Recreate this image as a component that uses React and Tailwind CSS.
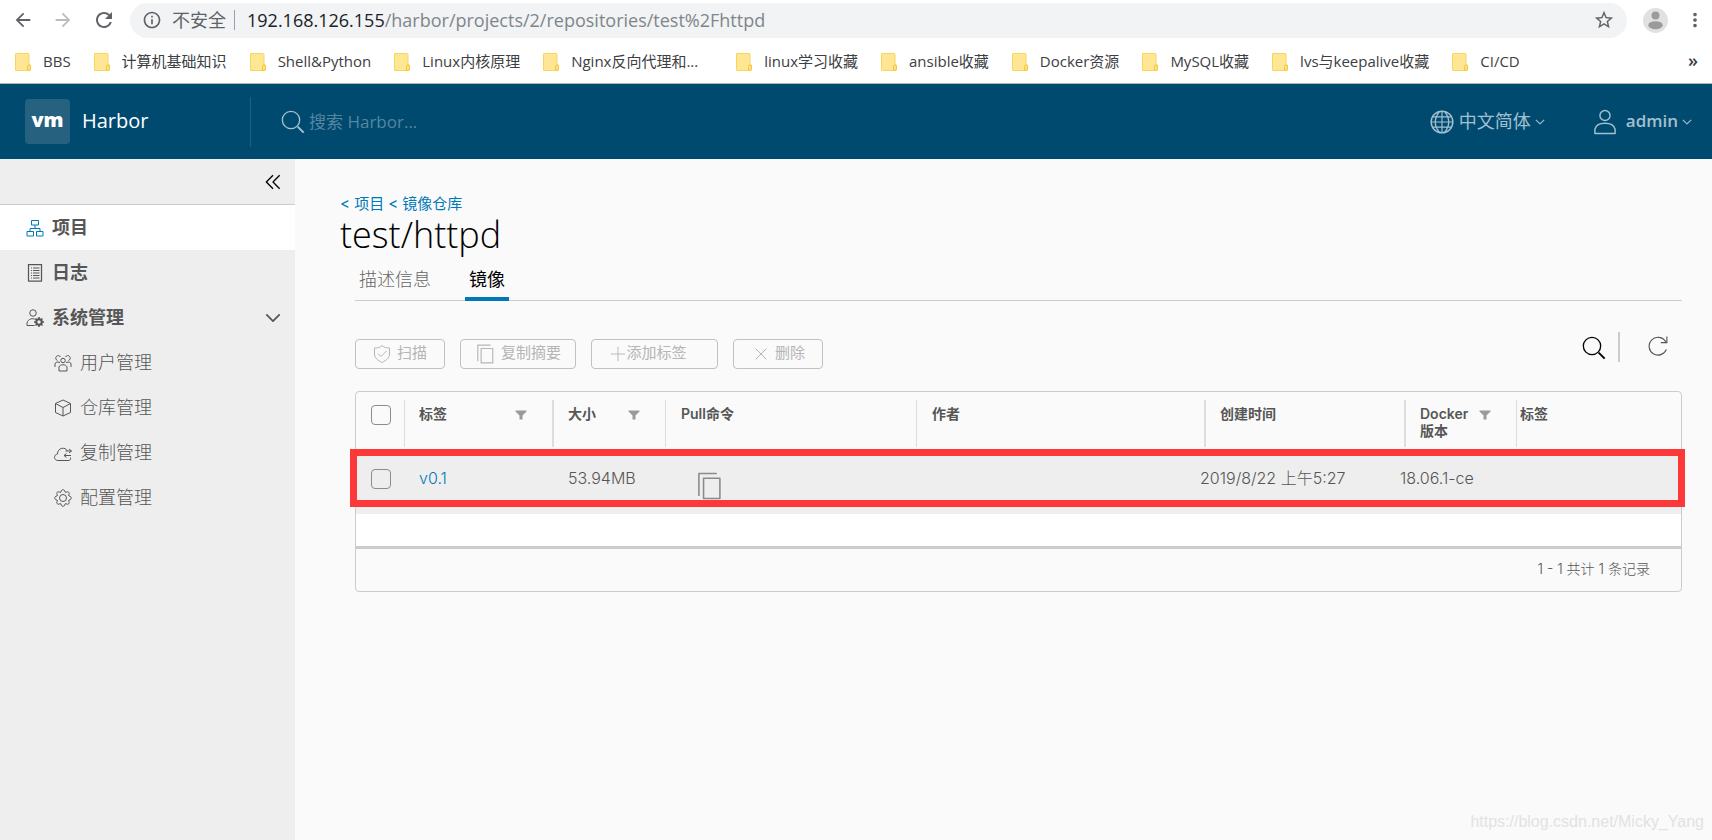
import {
  MdArrowBack,
  MdArrowForward,
  MdRefresh,
  MdInfoOutline,
  MdStarBorder,
  MdMoreVert,
} from 'react-icons/md';

const bookmarks = [
  { name: 'BBS' },
  { name: '计算机基础知识' },
  { name: 'Shell&Python' },
  { name: 'Linux内核原理' },
  { name: 'Nginx反向代理和...', truncated: true },
  { name: 'linux学习收藏' },
  { name: 'ansible收藏' },
  { name: 'Docker资源' },
  { name: 'MySQL收藏' },
  { name: 'lvs与keepalive收藏' },
  { name: 'CI/CD' },
];

function Icon({ size = 18, className = '', strokeWidth = 2, children }) {
  return (
    <svg
      width={size}
      height={size}
      viewBox="0 0 36 36"
      fill="none"
      stroke="currentColor"
      strokeWidth={strokeWidth}
      strokeLinejoin="round"
      className={`shrink-0 ${className}`}
      aria-hidden="true"
    >
      {children}
    </svg>
  );
}

function SearchIcon({ size = 24, className }) {
  return (
    <Icon size={size} className={className} strokeWidth={2}>
      <circle cx="15" cy="15" r="13" />
      <path d="M25 25l9 9" strokeWidth="3" />
    </Icon>
  );
}

function CaretIcon({ size = 10, className }) {
  return (
    <Icon size={size} className={className} strokeWidth={4}>
      <path d="M3 10l15 15 15-15" />
    </Icon>
  );
}

function FolderIcon() {
  return (
    <svg width="16" height="18" viewBox="0 0 16 18" className="shrink-0" aria-hidden="true">
      <path d="M1 .5h12a1 1 0 0 1 1 1V12h1.5v4a1.500 1.500 0 0 1-1.500 1.500H1a.5.5 0 0 1-.5-.5V1a.5.5 0 0 1 .5-.5z" fill="#ffe694" stroke="#f7d65c" />
      <path d="M12.500 17v-3.500a1.500 1.500 0 0 1 3 0V16a1.500 1.500 0 0 1-1.500 1.500z" fill="#ffe083" stroke="#f3c63a" />
    </svg>
  );
}

function CopyIcon({ size, className }) {
  return (
    <Icon size={size} className={className}>
      <path d="M5 31V2h23" />
      <path d="M11 8h21v26H11z" />
    </Icon>
  );
}

function FilterIcon() {
  return (
    <svg width="12" height="10" viewBox="0 0 12 10" className="shrink-0" aria-hidden="true">
      <path d="M.5.500h11v1L7.500 5.500V9.500h-3v-4L.5 1.500z" fill="#9a9a9a" />
    </svg>
  );
}

function BrowserBar() {
  return (
    <div className="bg-white font-['Open_Sans','Noto_Sans_CJK_SC',sans-serif]">
      <div className="flex h-10 items-center pl-3 text-[#5f6368]">
        <button type="button" aria-label="后退" className="mr-[18px]">
          <MdArrowBack size={22} />
        </button>
        <button type="button" aria-label="前进" className="mr-[18px]">
          <MdArrowForward size={22} className="text-[#babcbe]" />
        </button>
        <button type="button" aria-label="重新加载" className="mr-3.5">
          <MdRefresh size={24} />
        </button>
        <div className="flex h-[35px] flex-1 items-center rounded-full bg-[#f1f3f4] pr-3 pl-3 text-lg">
          <MdInfoOutline size={20} />
          <span className="ml-2.5">不安全</span>
          <span className="mx-2 h-5 w-px bg-[#9aa0a6]" />
          <span className="ml-1 flex-1 text-[#80868b]">
            <span className="text-[#202124]">192.168.126.155</span>/harbor/projects/2/repositories/test%2Fhttpd
          </span>
          <button type="button" aria-label="收藏">
            <MdStarBorder size={22} />
          </button>
        </div>
        <button type="button" aria-label="用户" className="mx-4">
          <svg width="25" height="25" viewBox="0 0 25 25" aria-hidden="true">
            <circle cx="12.500" cy="12.500" r="12.500" fill="#e1e1e1" />
            <circle cx="12.500" cy="7.500" r="4" fill="#9b9b9b" />
            <ellipse cx="12.500" cy="17.200" rx="7.200" ry="4" fill="#9b9b9b" />
          </svg>
        </button>
        <button type="button" aria-label="更多" className="mr-1.5">
          <MdMoreVert size={22} />
        </button>
      </div>
      <nav className="flex h-11 items-center border-b border-[#b6b4b6] pr-3.5 pl-[15px] text-[15px] text-[#3c4043]">
        <div className="flex flex-1 items-center gap-[23px]">
          {bookmarks.map(({ name, truncated }) => (
            <a key={name} href="#" className="flex items-center gap-3 whitespace-nowrap">
              <FolderIcon />
              <span className={truncated ? 'w-[142px]' : undefined}>{name}</span>
            </a>
          ))}
        </div>
        <button type="button" className="pb-1 text-lg font-semibold">»</button>
      </nav>
    </div>
  );
}

function Header() {
  return (
    <header className="flex h-[75px] items-center bg-[#004a70] text-lg text-[#a3c0cf]">
      <div className="flex w-[250px] items-center gap-3 pl-[25px]">
        <span className="flex size-[45px] items-center justify-center rounded bg-[#26617f] pb-1 font-['Open_Sans',sans-serif] text-xl font-extrabold text-white">
          vm
        </span>
        <span className="pb-0.5 font-['Open_Sans',sans-serif] text-xl text-white">Harbor</span>
      </div>
      <label className="flex h-[50px] flex-1 items-center gap-1 border-l border-[#1f5f81] pl-[30px]">
        <SearchIcon />
        <input
          type="text"
          aria-label="搜索"
          placeholder="搜索 Harbor..."
          className="w-60 bg-transparent pt-0.5 font-['Open_Sans','Noto_Sans_CJK_SC',sans-serif] text-[17px] outline-none placeholder:text-[#5586a0]"
        />
      </label>
      <div className="flex items-center gap-1">
        <Icon size={26} strokeWidth={2}>
          <circle cx="18" cy="18" r="15" />
          <path d="M18 3v30M5 11h26M3 18h30M5 25h26M14 4c-7 9-7 19 0 28M22 4c7 9 7 19 0 28" strokeWidth="1.600" />
        </Icon>
        <select aria-label="语言" className="appearance-none bg-transparent outline-none">
          <option>中文简体</option>
        </select>
        <CaretIcon />
      </div>
      <button type="button" className="mr-5 ml-[47px] flex items-center font-['Open_Sans',sans-serif] text-[17px] font-semibold">
        <Icon size={26} strokeWidth={2} className="mr-2">
          <circle cx="18" cy="9" r="7" />
          <path d="M4 34v-6c3-11 25-11 28 0v6z" />
        </Icon>
        admin
        <CaretIcon className="ml-1" />
      </button>
    </header>
  );
}

const subItems = [
  {
    name: '用户管理',
    icon: (
      <>
        <circle cx="18" cy="13" r="4.500" />
        <path d="M10 34v-8c1-6 15-6 16 0v8z" />
        <path d="M13 6a5 5 0 1 0-6 7M23 6a5 5 0 1 1 6 7M2 26v-6c0-3 4-5 10-3M34 26v-6c0-3-4-5-10-3" />
      </>
    ),
  },
  {
    name: '仓库管理',
    icon: <path d="M18 2l15 7v18l-15 7-15-7V9zM3 9l15 8 15-8M18 17v17" />,
  },
  {
    name: '复制管理',
    icon: (
      <>
        <path d="M33 27c1 4-1 6-5 6H8c-9 0-9-12-1-13 0-13 16-15 20-6" />
        <path d="M23 14h12m-5-4l5 4-5 4M34 23H20m5-4l-5 4 5 4" />
      </>
    ),
  },
  {
    name: '配置管理',
    icon: (
      <>
        <circle cx="18" cy="18" r="7" />
        <path d="M14 6c0-6 8-6 8 0l2 1c4-4 9 1 5 5l1 2c6 0 6 8 0 8l-1 2c4 4-1 9-5 5l-2 1c0 6-8 6-8 0l-2-1c-4 4-9-1-5-5l-1-2c-6 0-6-8 0-8l1-2c-4-4 1-9 5-5z" />
      </>
    ),
  },
];

function Sidebar() {
  return (
    <aside className="w-[295px] shrink-0 bg-[#eee] text-lg text-[#565656]">
      <div className="flex h-[46px] items-center justify-end border-b border-[#ccc] pr-3.5">
        <button type="button" aria-label="收起" className="text-black">
          <Icon size={16} strokeWidth={3}>
            <path d="M18 3L3 18l15 15M33 3L18 18l15 15" />
          </Icon>
        </button>
      </div>
      <nav>
        <a href="#" className="flex h-[45px] items-center gap-2 bg-white pl-[26px] font-bold">
          <Icon className="text-[#0079b8]">
            <path d="M11 3h14v9H11zM2 25h13v9H2zM21 25h13v9H21zM18 12v6M8 25v-6h20v6" />
          </Icon>
          项目
        </a>
        <a href="#" className="flex h-[45px] items-center gap-2 pl-[26px] font-bold">
          <Icon>
            <path d="M5 1h26v33H5z" strokeWidth="2.500" />
            <path d="M10 8h2M14 8h13M10 13h2M14 13h13M10 18h2M14 18h13M10 23h2M14 23h13M10 28h2M14 28h13" />
          </Icon>
          日志
        </a>
        <button type="button" className="flex h-[45px] w-full items-center gap-2 pr-3.5 pl-[26px] font-bold">
          <Icon>
            <circle cx="14" cy="8" r="6.500" />
            <path d="M17 33H2v-5c2-9 12-10 17-7" />
            <circle cx="26" cy="26" r="5.500" strokeWidth="4" />
            <path d="M26 16v4M26 32v4M16 26h4M32 26h4M19 19l3 3M30 30l3 3M33 19l-3 3M22 30l-3 3" strokeWidth="3" />
          </Icon>
          <span className="flex-1 text-left">系统管理</span>
          <CaretIcon size={16} />
        </button>
        {subItems.map((item) => (
          <a key={item.name} href="#" className="flex h-[45px] items-center gap-2 pl-[54px] font-light">
            <Icon>{item.icon}</Icon>
            {item.name}
          </a>
        ))}
      </nav>
    </aside>
  );
}

function Toolbar() {
  const button =
    'flex h-[30px] items-center justify-center rounded border border-[#c1c1c1] pb-px text-[15px] text-[#b5b5b5]';

  return (
    <div className="mt-[31px] flex items-start">
      <div className="flex flex-1 gap-[15px] pt-[7px]">
        <button type="button" disabled className={`${button} w-[90px] gap-1.5`}>
          <Icon>
            <path d="M18 1c4 4 9 5 15 5v12c0 8-7 13-15 17C10 31 3 26 3 18V6c6 0 11-1 15-5z" />
            <path d="M10 17l6 6 11-11" />
          </Icon>
          扫描
        </button>
        <button type="button" disabled className={`${button} w-[116px] gap-1.5`}>
          <CopyIcon size={20} />
          复制摘要
        </button>
        <button type="button" disabled className={`${button} w-[127px] pr-3`}>
          <Icon size={16}>
            <path d="M18 2v32M2 18h32" />
          </Icon>
          添加标签
        </button>
        <button type="button" disabled className={`${button} w-[90px] gap-2 pl-1`}>
          <Icon size={12}>
            <path d="M2 2l32 32M34 2L2 34" strokeWidth="3" />
          </Icon>
          删除
        </button>
      </div>
      <button type="button" aria-label="搜索" className="mt-1 text-black">
        <SearchIcon />
      </button>
      <span className="mx-3 h-[30px] w-0.5 bg-[#ccc]" />
      <button type="button" aria-label="刷新" className="mt-1 mr-3.5 ml-4">
        <Icon size={20}>
          <path d="M33 24A16 16 0 1 1 31 9l2 2" />
          <path d="M34 1v11H23" />
        </Icon>
      </button>
    </div>
  );
}

function HeadCell({ children, filter, className = '' }) {
  return (
    <th className="h-[57px] p-0 pt-2 align-top font-semibold">
      <div className={`flex h-[47px] items-start pt-[5px] text-left ${className}`}>
        <span className="flex-1">{children}</span>
        {filter && (
          <button type="button" aria-label="过滤" className="mt-[5px] mr-[25px]">
            <FilterIcon />
          </button>
        )}
      </div>
    </th>
  );
}

function Checkbox({ label }) {
  return (
    <input
      type="checkbox"
      aria-label={label}
      className="block size-5 appearance-none rounded border border-[#8c8c8c]"
    />
  );
}

function ImageTable() {
  return (
    <div className="mt-[22px] rounded border border-[#ccc]">
      <div className="relative">
        <table className="w-full table-fixed border-collapse">
          <colgroup>
            <col className="w-12" />
            <col className="w-[148px]" />
            <col className="w-[113px]" />
            <col className="w-[251px]" />
            <col />
            <col className="w-[200px]" />
            <col className="w-[116px]" />
            <col className="w-[165px]" />
          </colgroup>
          <thead className="text-sm leading-[17px]">
            <tr>
              <th className="p-0 pt-[13px] pl-[15px] align-top">
                <Checkbox label="全选" />
              </th>
              <HeadCell filter className="border-l border-[#ddd] pl-3.5">标签</HeadCell>
              <HeadCell filter className="border-l-2 border-[#ddd] pl-3.5">大小</HeadCell>
              <HeadCell className="border-l border-[#ddd] pl-[15px]">Pull命令</HeadCell>
              <HeadCell className="border-l border-[#ddd] pl-[15px]">作者</HeadCell>
              <HeadCell className="ml-1 border-l-2 border-[#ddd] pl-3.5">创建时间</HeadCell>
              <HeadCell filter className="ml-1 border-l-2 border-[#ddd] pl-3.5">Docker 版本</HeadCell>
              <HeadCell className="border-l border-[#ddd] pl-[3px]">标签</HeadCell>
            </tr>
          </thead>
          <tbody className="bg-[#eee] text-base font-light">
            <tr className="h-[65px] align-top">
              <td className="pt-5 pl-[15px]">
                <Checkbox label="选择 v0.1" />
              </td>
              <td className="pt-[17px] pl-[15px]">
                <a href="#" className="text-[#0079b8]">v0.1</a>
              </td>
              <td className="pt-[17px] pl-4">53.94MB</td>
              <td className="pt-[23px] pl-[30px]">
                <button type="button" aria-label="复制Pull命令" className="block text-[#8a8a8a]">
                  <CopyIcon size={28} />
                </button>
              </td>
              <td />
              <td className="pt-[17px]">2019/8/22 上午5:27</td>
              <td className="pt-[17px]">18.06.1-ce</td>
              <td />
            </tr>
          </tbody>
        </table>
        {/* highlight around the selected row */}
        <div className="pointer-events-none absolute top-[57px] -right-1 -left-1.5 h-[58px] border-[7px] border-[#fc3838]" />
      </div>
      <div className="h-8 bg-white" />
      <div className="flex h-[45px] items-center justify-end border-t-3 border-[#ccc] pr-[31px] pb-0.5 text-sm font-light">
        1 - 1 共计 1 条记录
      </div>
    </div>
  );
}

function Content() {
  return (
    <main className="flex-1 bg-[#fafafa] pt-[34px] pr-[30px] pl-[45px]">
      <div className="flex gap-1 text-[15px] leading-[22px] text-[#0079b8]">
        <a href="#">&lt; 项目</a>
        <a href="#">&lt; 镜像仓库</a>
      </div>
      <h1 className="font-['Open_Sans',sans-serif] text-[36px] leading-10 font-light text-black">test/httpd</h1>
      <div className="pl-[15px]">
        <div role="tablist" className="flex h-[46px] items-end gap-[34px] border-b border-[#ccc] pl-1 text-lg">
          <button type="button" role="tab" aria-selected="false" className="-mb-px h-[38px] border-b-4 border-transparent font-light text-[#666]">
            描述信息
          </button>
          <button type="button" role="tab" aria-selected="true" className="-mb-px h-[38px] border-b-4 border-[#0079b8] px-1 text-black">
            镜像
          </button>
        </div>
        <Toolbar />
        <ImageTable />
      </div>
    </main>
  );
}

function App() {
  return (
    <div className="relative flex min-h-screen flex-col font-['Inter','Noto_Sans_CJK_SC',sans-serif] text-[#565656]">
      <BrowserBar />
      <Header />
      <div className="flex flex-1">
        <Sidebar />
        <Content />
      </div>
      <span className="pointer-events-none absolute right-2 bottom-1.5 font-['Liberation_Sans',sans-serif] text-base text-[#e2e2e2]">
        https://blog.csdn.net/Micky_Yang
      </span>
    </div>
  );
}

export default App;
